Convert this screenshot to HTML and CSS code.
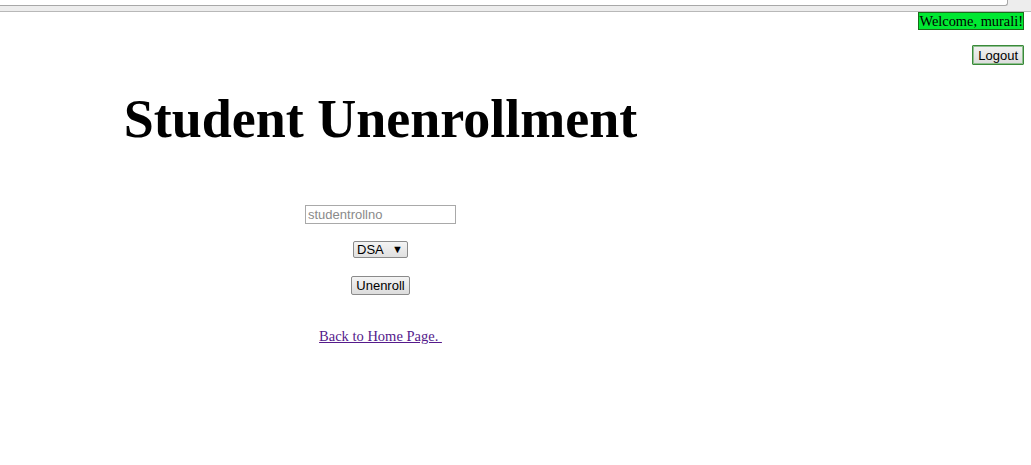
FILE: index.html
```html
<!DOCTYPE html>
<html>
<head>
<meta charset="utf-8">
<link rel="stylesheet" href="styles.css">
</head>
<body>
<div class="chrome"><div class="addr"></div></div>
<div class="top">
  <span class="welcome">Welcome, murali!</span>
  <button class="logout">Logout</button>
</div>
<div class="main">
  <h1 class="title">Student Unenrollment</h1>
  <form class="form">
    <input class="roll" type="text" placeholder="studentrollno">
    <div class="sel"><span>DSA</span><span class="arrow">&#9660;</span></div>
    <button class="btn" type="button">Unenroll</button>
  </form>
  <a class="back" href="#">Back to Home Page. </a>
</div>
</body>
</html>
```
FILE: styles.css
```css
html, body { margin: 0; padding: 0; background: #fff; }
body { font-family: "Liberation Serif", serif; font-size: 14.5px; color: #000; }
.chrome { height: 11px; background: #ededed; border-bottom: 1px solid #b8b8b8; }
.addr { width: 1007px; height: 5px; background: #fff; border-right: 1px solid #a8a8a8; border-bottom: 1px solid #a8a8a8; border-bottom-right-radius: 3px; }
.top { display: flex; flex-direction: column; align-items: flex-end; padding-right: 7px; }
.welcome { background: #00e832; border: 1px solid #1a6a1a; line-height: 16px; padding: 0; font-size: 14.4px; }
.logout { margin-top: 15px; font-family: "Liberation Sans", Arial, sans-serif; font-size: 13px; height: 20px; padding: 0 5px; background: linear-gradient(#f2f2f2, #dcdcdc); border: 1px solid #3a8a3a; box-shadow: inset 0 0 0 1px #8fc08f; border-radius: 1px; color: #000; }
.main { width: 761px; text-align: center; }
.title { font-size: 54px; font-weight: bold; margin: 23px 0 0; line-height: 62px; }
.form { display: flex; flex-direction: column; align-items: center; margin-top: 55px; }
.roll { width: 151px; height: 19px; box-sizing: border-box; border: 1px solid #a9a9a9; padding: 1px 2px; font-family: "Liberation Sans", Arial, sans-serif; font-size: 13px; color: #000; outline: none; }
.roll::placeholder { color: #8a8a8a; }
.sel { margin-top: 17px; width: 55px; height: 17px; box-sizing: border-box; border: 1px solid #8a8a8a; border-radius: 2px; background: linear-gradient(#f4f4f4, #e0e0e0); display: flex; justify-content: space-between; align-items: center; padding: 0 4px 0 3px; font-family: "Liberation Sans", Arial, sans-serif; font-size: 13px; }
.arrow { font-size: 11px; line-height: 1; }
.btn { margin-top: 18px; width: 59px; height: 19px; box-sizing: border-box; padding: 0; font-family: "Liberation Sans", Arial, sans-serif; font-size: 13px; background: linear-gradient(#f4f4f4, #dcdcdc); border: 1px solid #8a8a8a; border-radius: 2px; color: #000; }
.back { display: inline-block; margin-top: 33px; color: #551a8b; font-size: 14.5px; white-space: pre; }
```
